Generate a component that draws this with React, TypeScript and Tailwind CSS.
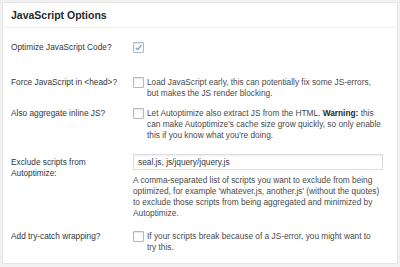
import React from "react";

const font = { fontFamily: '"Liberation Sans", Arial, sans-serif' };

function Checkbox({ checked = false }: { checked?: boolean }) {
  return (
    <span className="w-[11px] h-[11px] shrink-0 border border-[#b4b9be] rounded-[1px] bg-white shadow-[inset_0_1px_2px_rgba(0,0,0,0.1)] flex items-center justify-center">
      {checked && (
        <svg width="9" height="9" viewBox="0 0 10 10">
          <path d="M2 5.2 L4.2 7.4 L8.2 2.4" fill="none" stroke="#6f9fc4" strokeWidth="1.4" />
        </svg>
      )}
    </span>
  );
}

function CheckField({ lines, checked }: { lines: React.ReactNode[]; checked?: boolean }) {
  return (
    <div className="flex items-start gap-[3px]">
      <Checkbox checked={checked} />
      {lines.length > 0 && (
        <div className="text-[#4a4a4a]">
          {lines.map((l, i) => (
            <div key={i} className="whitespace-nowrap">
              {l}
            </div>
          ))}
        </div>
      )}
    </div>
  );
}

export default function App() {
  return (
    <div className="w-[400px] h-[267px] bg-[#f1f1f1] pt-[2px] px-[2px]" style={font}>
      <div className="h-[262px] bg-white border border-[#e5e5e5] text-[8.3px] leading-[11px]">
        {/* Header */}
        <div className="h-[25px] border-b border-[#eeeeee] pl-[8px] flex items-center">
          <h2 className="text-[10.5px] font-bold text-[#23282d]">JavaScript Options</h2>
        </div>

        <div className="pl-[8px] pr-[14px]">
          {/* Optimize */}
          <div className="grid grid-cols-[122px_1fr] mt-[14px]">
            <div className="text-[#32373c]">Optimize JavaScript Code?</div>
            <CheckField checked lines={[]} />
          </div>

          {/* Force in head */}
          <div className="grid grid-cols-[122px_1fr] mt-[24px]">
            <div className="text-[#32373c]">Force JavaScript in &lt;head&gt;?</div>
            <CheckField
              lines={[
                "Load JavaScript early, this can potentially fix some JS-errors,",
                "but makes the JS render blocking.",
              ]}
            />
          </div>

          {/* Inline JS */}
          <div className="grid grid-cols-[122px_1fr] mt-[9px]">
            <div className="text-[#32373c]">Also aggregate inline JS?</div>
            <CheckField
              lines={[
                <>
                  Let Autoptimize also extract JS from the HTML. <b className="text-[#23282d]">Warning:</b> this
                </>,
                "can make Autoptimize's cache size grow quickly, so only enable",
                "this if you know what you're doing.",
              ]}
            />
          </div>

          {/* Exclude */}
          <div className="grid grid-cols-[122px_1fr] mt-[13px]">
            <div className="text-[#32373c] pt-[3px]">
              Exclude scripts from
              <br />
              Autoptimize:
            </div>
            <div>
              <div className="h-[16px] border border-[#dddddd] shadow-[inset_0_1px_2px_rgba(0,0,0,0.07)] px-[4px] flex items-center text-[#32373c]">
                seal.js, js/jquery/jquery.js
              </div>
              <div className="mt-[5px] text-[#4a4a4a]">
                <div className="whitespace-nowrap">A comma-separated list of scripts you want to exclude from being</div>
                <div className="whitespace-nowrap">optimized, for example 'whatever.js, another.js' (without the quotes)</div>
                <div className="whitespace-nowrap">to exclude those scripts from being aggregated and minimized by</div>
                <div className="whitespace-nowrap">Autoptimize.</div>
              </div>
            </div>
          </div>

          {/* Try-catch */}
          <div className="grid grid-cols-[122px_1fr] mt-[12px]">
            <div className="text-[#32373c]">Add try-catch wrapping?</div>
            <CheckField
              lines={[
                "If your scripts break because of a JS-error, you might want to",
                "try this.",
              ]}
            />
          </div>
        </div>
      </div>
    </div>
  );
}
